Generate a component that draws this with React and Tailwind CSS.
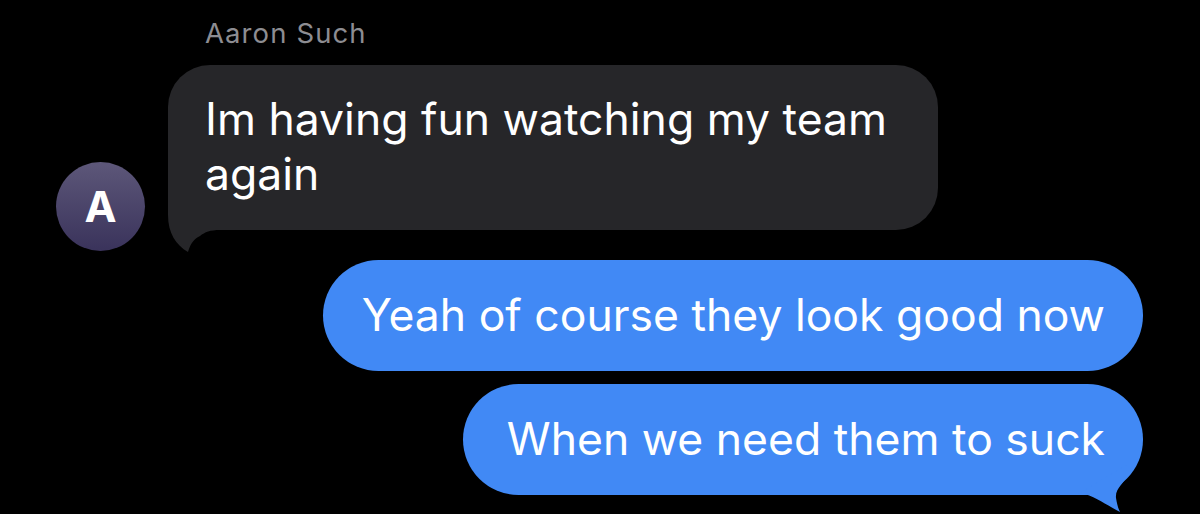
import React from 'react';

// incoming bubble tail, bottom-left
function TailLeft() {
    return (
        <svg className="absolute left-0 bottom-[-22px]" width="64" height="67" viewBox="0 0 64 67">
            <path d="M0 0 L0 30 C0 48 8 60 20 67 C22 61 24 55 32 51 C37 47 42 45 52 45 L64 45 L64 0 Z" fill="#262629" />
        </svg>
    );
}

// outgoing bubble tail, bottom-right
function TailRight() {
    return (
        <svg className="absolute right-[5px] bottom-[-19px]" width="60" height="50" viewBox="0 0 60 50">
            <path d="M0 30 L50 0 L50 10 C46 20 37 24 38 34 C39 40 40 44 42 48 C30 42 20 34 7 30 Z" fill="#4189f5" />
        </svg>
    );
}

function Outgoing({ text, width, tail }) {
    return (
        <div className={`relative ${width} h-[111px] rounded-full bg-[#4189f5] flex items-center justify-end pr-[38px] text-white text-[44.5px]`}>
            <span className="relative">{text}</span>
            {tail && <TailRight />}
        </div>
    );
}

export default function App() {
    return (
        <div className="w-[1200px] h-[514px] bg-black overflow-hidden font-['Inter',sans-serif] flex flex-col">
            <div className="pl-[205px] pt-[16px] text-[27.5px] leading-[34px] tracking-[1.1px] text-[#8d8d92]">Aaron Such</div>

            <div className="flex items-start pl-[56px] mt-[15px] gap-[23px]">
                <div className="mt-[97px] w-[89px] h-[89px] rounded-full bg-gradient-to-b from-[#5d5779] to-[#3a335b] flex items-center justify-center text-white text-[43px] leading-none font-bold">
                    A
                </div>
                <div className="relative w-[770px] h-[165px] rounded-[42px] bg-[#262629] pl-[37px] pt-[27px] text-white text-[44.5px] leading-[55px]">
                    <span className="relative z-10">Im having fun watching my team<br />again</span>
                    <TailLeft />
                </div>
            </div>

            <div className="flex flex-col items-end pr-[57px] mt-[9px] gap-[13px]">
                <Outgoing text="Yeah of course they look good now" width="w-[820px]" />
                <Outgoing text="When we need them to suck" width="w-[680px]" tail />
            </div>
        </div>
    );
}
